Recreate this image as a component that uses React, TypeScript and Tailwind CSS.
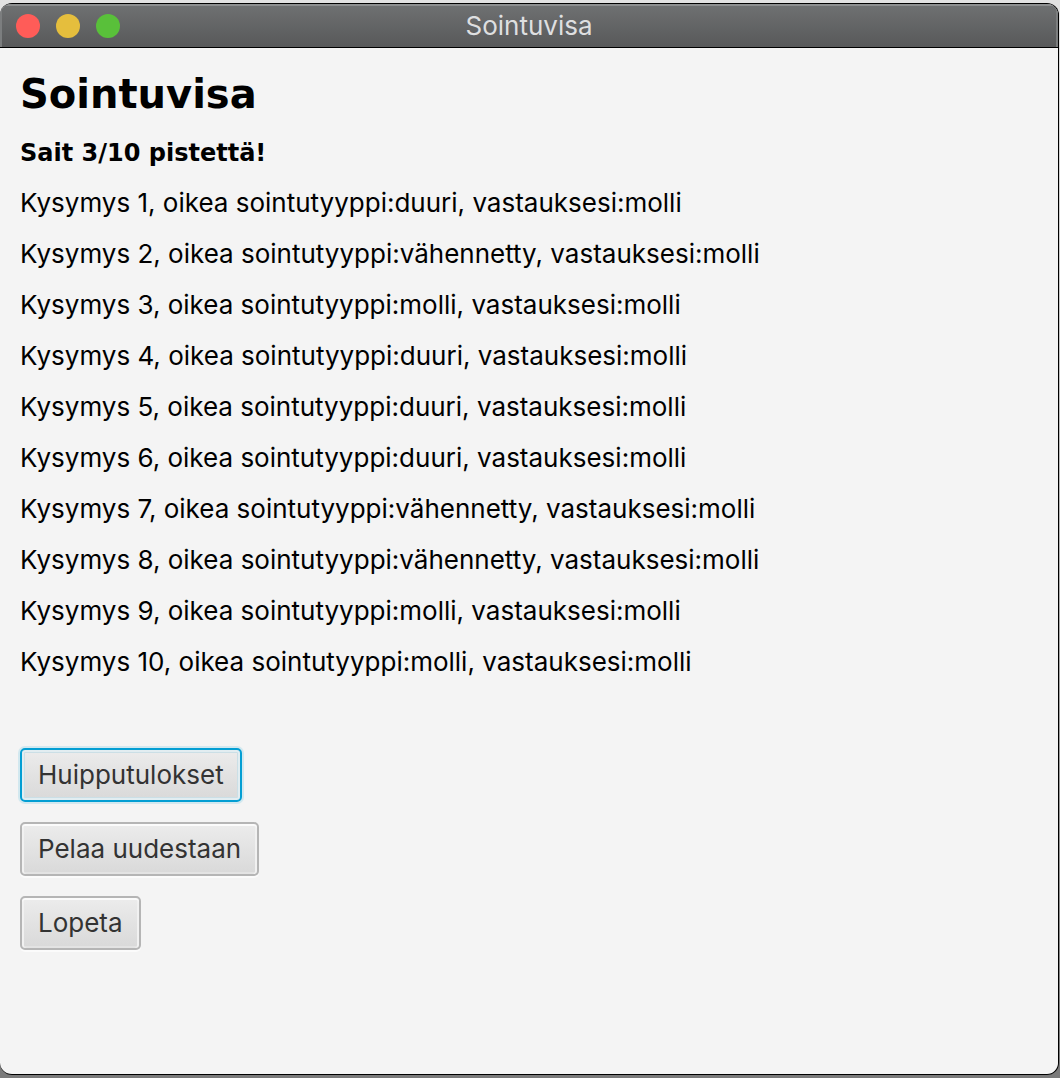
const rows: [string, string][] = [
  ["duuri", "molli"],
  ["vähennetty", "molli"],
  ["molli", "molli"],
  ["duuri", "molli"],
  ["duuri", "molli"],
  ["duuri", "molli"],
  ["vähennetty", "molli"],
  ["vähennetty", "molli"],
  ["molli", "molli"],
  ["molli", "molli"],
];

const button =
  "h-[54px] rounded-[5px] border-2 border-[#b5b5b5] bg-linear-to-b from-[#ececec] to-[#d9d9d9] px-4 text-[26px] leading-[30px] text-[#333333] outline-none shadow-[inset_0_2px_0_#fbfbfb,inset_2px_0_0_#f1f1f1,inset_-2px_0_0_#f1f1f1,inset_0_-2px_0_#e3e3e3,0_2px_0_#fbfbfb] focus:border-[#039ed3] focus:shadow-[inset_0_0_0_2px_#e2edf1,inset_0_0_0_3px_#cbdfe6,0_0_0_2px_#d2e8ef]";

export default function App() {
  return (
    <div className="min-h-screen bg-linear-to-b from-[#e2e2e2] from-[3px] via-[#b4b4b4] via-50% to-[#7a7a7a] pt-[3px] pr-px pb-[3px] font-['Inter',sans-serif]">
      <main className="flex min-h-[calc(100vh-6px)] flex-col overflow-hidden rounded-[12px] border-y border-r border-black bg-[#f4f4f4]">
        <header className="grid h-11 grid-cols-3 items-center border-b border-black bg-linear-to-b from-[#6f7172] to-[#58595a] px-4 shadow-[inset_0_2px_0_#8d8f90,inset_2px_0_0_#7c7e7f,inset_-2px_0_0_#7c7e7f]">
          <div className="flex gap-4">
            <button aria-label="Sulje" className="size-6 rounded-full bg-[#ff5c58]" />
            <button aria-label="Pienennä" className="size-6 rounded-full bg-[#e5be3d]" />
            <button aria-label="Suurenna" className="size-6 rounded-full bg-[#59c03a]" />
          </div>
          <div className="text-center text-[26px] leading-[30px] text-[#dedfe0]">Sointuvisa</div>
        </header>
        <section className="flex flex-col items-start px-5 pt-[21px] text-black">
          <h1 className="font-['DejaVu_Sans',sans-serif] text-[40px] leading-[50px] font-bold">Sointuvisa</h1>
          <h2 className="mt-[19px] font-['DejaVu_Sans',sans-serif] text-[24px] leading-[30px] font-bold">Sait 3/10 pistettä!</h2>
          <ul className="mt-[19px] flex flex-col gap-5 text-[26px] leading-[31px]">
            {rows.map(([correct, answer], i) => (
              <li key={i}>{`Kysymys ${i + 1}, oikea sointutyyppi:${correct}, vastauksesi:${answer}`}</li>
            ))}
          </ul>
          <div className="mt-[71px] mb-5 flex flex-col items-start gap-5">
            <button autoFocus className={button}>Huipputulokset</button>
            <button className={button}>Pelaa uudestaan</button>
            <button className={button}>Lopeta</button>
          </div>
        </section>
      </main>
    </div>
  );
}
